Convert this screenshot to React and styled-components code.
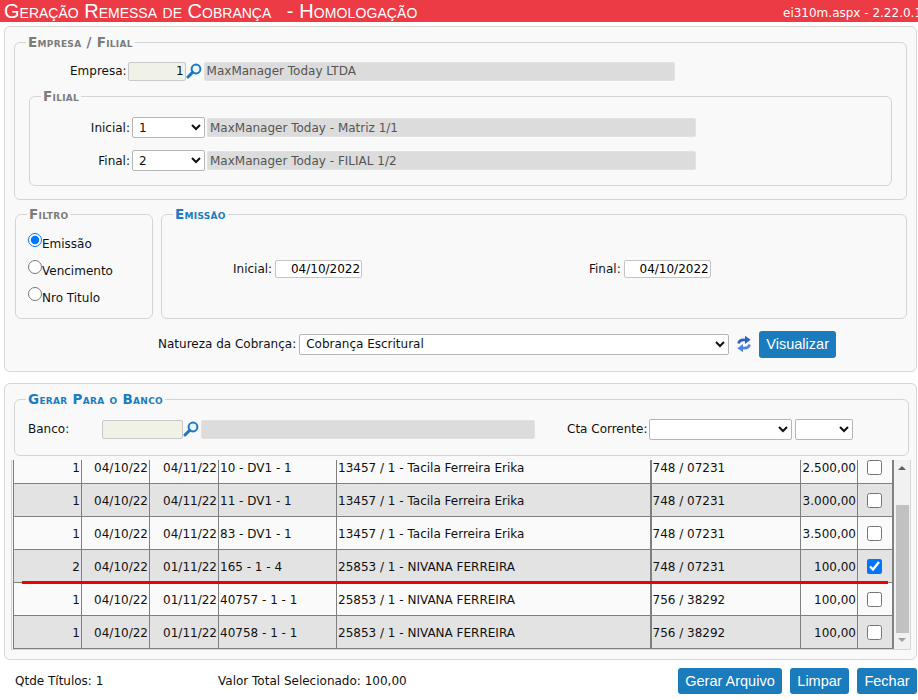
import styled, { createGlobalStyle } from "styled-components";

const linhas = [
  { qtd: 1, emissao: "04/10/22", venc: "04/11/22", titulo: "10 - DV1 - 1", cliente: "13457 / 1 - Tacila Ferreira Erika", conta: "748 / 07231", valor: "2.500,00" },
  { qtd: 1, emissao: "04/10/22", venc: "04/11/22", titulo: "11 - DV1 - 1", cliente: "13457 / 1 - Tacila Ferreira Erika", conta: "748 / 07231", valor: "3.000,00" },
  { qtd: 1, emissao: "04/10/22", venc: "04/11/22", titulo: "83 - DV1 - 1", cliente: "13457 / 1 - Tacila Ferreira Erika", conta: "748 / 07231", valor: "3.500,00" },
  { qtd: 2, emissao: "04/10/22", venc: "01/11/22", titulo: "165 - 1 - 4", cliente: "25853 / 1 - NIVANA FERREIRA", conta: "748 / 07231", valor: "100,00", marcado: true },
  { qtd: 1, emissao: "04/10/22", venc: "01/11/22", titulo: "40757 - 1 - 1", cliente: "25853 / 1 - NIVANA FERREIRA", conta: "756 / 38292", valor: "100,00" },
  { qtd: 1, emissao: "04/10/22", venc: "01/11/22", titulo: "40758 - 1 - 1", cliente: "25853 / 1 - NIVANA FERREIRA", conta: "756 / 38292", valor: "100,00" },
];

function Lupa() {
  return (
    <LupaSvg viewBox="0 0 16 16">
      <circle cx="10" cy="6" r="4.4" fill="#eaf4fb" stroke="#1a78c2" strokeWidth="2" />
      <path d="M6.6 9.4 L2 14" stroke="#1a78c2" strokeWidth="3" strokeLinecap="round" />
    </LupaSvg>
  );
}

function Atualizar() {
  return (
    <RefreshSvg viewBox="0 0 14 18">
      <path d="M1.5 8.5 C2 5.5 5 4.6 8.5 5" fill="none" stroke="#2a63c8" strokeWidth="2.6" />
      <path d="M8 0.8 L13.6 4.8 L8 9 Z" fill="#2a63c8" />
      <path d="M12.5 9.5 C12 12.5 9 13.4 5.5 13" fill="none" stroke="#4d86dc" strokeWidth="2.6" />
      <path d="M6 9 L0.4 13.2 L6 17.2 Z" fill="#4d86dc" />
    </RefreshSvg>
  );
}

export default function App() {
  return (
    <>
      <GlobalStyle />
      <Header>
        <Title>Geração Remessa de Cobrança <TitleEnv>- Homologação</TitleEnv></Title>
        <Version>ei310m.aspx - 2.22.0.1</Version>
      </Header>

      <Panel>
        <EmpresaSet>
          <Legend>Empresa / Filial</Legend>
          <EmpresaRow>
            <EmpresaLabel>Empresa:</EmpresaLabel>
            <CodeInput width={58} defaultValue="1" readOnly />
            <Lupa />
            <GreyInput width={471} defaultValue="MaxManager Today LTDA" readOnly />
          </EmpresaRow>
          <FilialSet>
            <Legend>Filial</Legend>
            <FilialRow>
              <FilialLabel>Inicial:</FilialLabel>
              <Select width={73}><option>1</option></Select>
              <GreyInput width={489} defaultValue="MaxManager Today - Matriz 1/1" readOnly />
            </FilialRow>
            <FilialRow>
              <FilialLabel>Final:</FilialLabel>
              <Select width={73}><option>2</option></Select>
              <GreyInput width={489} defaultValue="MaxManager Today - FILIAL 1/2" readOnly />
            </FilialRow>
          </FilialSet>
        </EmpresaSet>

        <FiltroRow>
          <FiltroSet>
            <Legend>Filtro</Legend>
            <RadioLine><input type="radio" name="filtro" defaultChecked />Emissão</RadioLine>
            <RadioLine><input type="radio" name="filtro" />Vencimento</RadioLine>
            <RadioLine><input type="radio" name="filtro" />Nro Titulo</RadioLine>
          </FiltroSet>
          <EmissaoSet>
            <Legend $blue>Emissão</Legend>
            <DateRow>
              <DateGroup $width={356}>
                <Label>Inicial:</Label>
                <DateInput defaultValue="04/10/2022" readOnly />
              </DateGroup>
              <DateGroup>
                <Label>Final:</Label>
                <DateInput defaultValue="04/10/2022" readOnly />
              </DateGroup>
            </DateRow>
          </EmissaoSet>
        </FiltroRow>

        <NaturezaRow>
          <NaturezaLabel>Natureza da Cobrança:</NaturezaLabel>
          <Select width={430}><option>Cobrança Escritural</option></Select>
          <Atualizar />
          <Button $w={77}>Visualizar</Button>
        </NaturezaRow>
      </Panel>

      <BottomPanel>
        <BancoSet>
          <Legend $blue>Gerar Para o Banco</Legend>
          <BancoRow>
            <BancoLabel>Banco:</BancoLabel>
            <CodeInput width={81} readOnly />
            <Lupa />
            <GreyInput width={334} readOnly />
            <CtaLabel>Cta Corrente:</CtaLabel>
            <Select width={143}><option></option></Select>
            <SmallSelect width={58}><option></option></SmallSelect>
          </BancoRow>
        </BancoSet>

        <GridWrap>
          <Table>
            <colgroup>
              <col width="68" />
              <col width="68" />
              <col width="69" />
              <col width="118" />
              <col width="314" />
              <col width="150" />
              <col width="57" />
              <col width="35" />
            </colgroup>
            <tbody>
              {linhas.map((l, i) => (
                <Row key={i} $par={i % 2 === 1} $first={i === 0}>
                  <Cell $right>{l.qtd}</Cell>
                  <Cell $right>{l.emissao}</Cell>
                  <Cell $right>{l.venc}</Cell>
                  <Cell>{l.titulo}</Cell>
                  <Cell $thick>{l.cliente}</Cell>
                  <Cell>{l.conta}</Cell>
                  <Cell $right>{l.valor}</Cell>
                  <Cell $center><Check type="checkbox" $first={i === 0} defaultChecked={l.marcado} /></Cell>
                </Row>
              ))}
            </tbody>
          </Table>
          <Scrollbar>
            <ArrowUp />
            <ThumbArea><Thumb /></ThumbArea>
            <ArrowDown />
          </Scrollbar>
          <RedLine />
        </GridWrap>
      </BottomPanel>

      <Footer>
        <Qtde>Qtde Títulos: 1</Qtde>
        <Total>Valor Total Selecionado: 100,00</Total>
        <Actions>
          <FooterButton $w={104}>Gerar Arquivo</FooterButton>
          <FooterButton $w={59}>Limpar</FooterButton>
          <FooterButton $w={60}>Fechar</FooterButton>
        </Actions>
      </Footer>
    </>
  );
}

const GlobalStyle = createGlobalStyle`
  html, body {
    margin: 0;
    padding: 0;
    background: #fff;
    overflow: hidden;
  }
  body {
    font-family: "DejaVu Sans", Verdana, sans-serif;
    font-size: 12px;
    color: #111;
  }
  * {
    box-sizing: border-box;
  }
`;

const Header = styled.div`
  height: 22px;
  background: #ec3b45;
  color: #fff;
  display: flex;
  justify-content: space-between;
  align-items: center;
  overflow: hidden;
  white-space: nowrap;
  padding-left: 4px;
`;

const Title = styled.div`
  font-family: "Liberation Sans", Arial, sans-serif;
  font-variant: small-caps;
  font-size: 20px;
  line-height: 22px;
`;

const TitleEnv = styled.span`
  margin-left: 10px;
  letter-spacing: 0.1px;
`;

const Version = styled.div`
  flex: none;
  width: 135px;
  font-size: 12px;
  padding-top: 3px;
`;

const Panel = styled.div`
  margin: 4px 1px 0 4px;
  height: 346px;
  background: #f9f9f9;
  border: 1px solid #d6d6d6;
  border-radius: 6px;
  padding: 8px 9px 0 9px;
`;

const BottomPanel = styled(Panel)`
  margin-top: 11px;
  height: 277px;
  padding-top: 8px;
  padding-left: 6px;
  padding-right: 6px;
`;

const Fieldset = styled.fieldset`
  margin: 0;
  padding: 0;
  min-width: 0;
  border: 1px solid #d4d4d4;
  border-radius: 6px;
`;

const Legend = styled.legend`
  font-weight: bold;
  font-variant: small-caps;
  font-size: 13.5px;
  letter-spacing: 0.3px;
  line-height: 15px;
  color: ${(p) => (p.$blue ? "#1c7cc0" : "#7c7c7c")};
  padding: 0 2px;
  margin-left: 11px;
`;

const EmpresaSet = styled(Fieldset)`
  height: 165px;
  padding: 0 14px;

  & > legend {
    margin-left: -3px;
  }
`;

const EmpresaRow = styled.div`
  display: flex;
  align-items: center;
  padding-left: 41px;
  height: 20px;
  margin-top: 11px;
  margin-bottom: 8px;
`;

const Label = styled.span`
  white-space: nowrap;
  margin-right: 3px;
`;

const EmpresaLabel = styled(Label)`
  margin-right: 1px;
`;

const Input = styled.input`
  height: 19px;
  width: ${(p) => p.width}px;
  font: inherit;
  border-radius: 2px;
  outline: none;
  padding: 0 1px;
  flex: none;
`;

const CodeInput = styled(Input)`
  background: #f0f2e8;
  border: 1px solid #c8c8c8;
  text-align: right;
  color: #111;
`;

const GreyInput = styled(Input)`
  background: #dcdcdc;
  border: 1px solid #e2e2e2;
  color: #555;
  padding-left: 2px;
  margin-left: 2px;
`;

const LupaSvg = styled.svg`
  width: 16px;
  height: 16px;
  flex: none;
`;

const RefreshSvg = styled.svg`
  width: 14px;
  height: 18px;
  margin: 0 8px 0 8px;
  flex: none;
`;

const Select = styled.select`
  width: ${(p) => p.width}px;
  height: 21px;
  font: inherit;
  background: #fff;
  color: #111;
  border: 1px solid #b5b5b5;
  border-radius: 2px;
  padding: 0 2px;
  flex: none;
`;

const SmallSelect = styled(Select)`
  margin-left: 3px;
`;

const FilialSet = styled(Fieldset)`
  height: 97px;
  padding-top: 13px;
`;

const FilialRow = styled.div`
  display: flex;
  align-items: center;
  height: 21px;
  margin-bottom: 12px;
`;

const FilialLabel = styled.span`
  width: 102px;
  text-align: right;
  padding-right: 2px;
  white-space: nowrap;
`;

const FiltroRow = styled.div`
  display: flex;
  gap: 8px;
  margin-top: 7px;
  padding-left: 1px;
`;

const FiltroSet = styled(Fieldset)`
  width: 138px;
  height: 112px;
  padding-top: 8px;
`;

const RadioLine = styled.label`
  display: flex;
  align-items: center;
  height: 27px;
  padding-left: 12px;
  white-space: nowrap;

  input {
    margin: 0;
    width: 14px;
    height: 14px;
    transform: translateY(-4px);
  }
`;

const EmissaoSet = styled(Fieldset)`
  flex: 1;
  height: 112px;
`;

const DateRow = styled.div`
  display: flex;
  align-items: center;
  padding-left: 71px;
  height: 90px;
  padding-top: 4px;
`;

const DateGroup = styled.div`
  display: flex;
  align-items: center;
  width: ${(p) => (p.$width ? `${p.$width}px` : "auto")};
`;

const DateInput = styled(Input)`
  width: 87px;
  height: 18px;
  background: #fff;
  border: 1px solid #c4c4c4;
  text-align: right;
`;

const NaturezaRow = styled.div`
  display: flex;
  align-items: center;
  padding-left: 144px;
  margin-top: 9px;
  height: 32px;
`;

const NaturezaLabel = styled.span`
  white-space: nowrap;
  margin-right: 3px;
`;

const Button = styled.button`
  width: ${(p) => p.$w}px;
  height: 27px;
  border: none;
  border-radius: 3px;
  background: #1a7bbd;
  color: #fff;
  font-family: "Liberation Sans", Arial, sans-serif;
  font-size: 14.5px;
  padding: 0;
  white-space: nowrap;
  flex: none;
`;

const FooterButton = styled(Button)`
  height: 26px;
`;

const BancoSet = styled(Fieldset)`
  margin-left: 3px;
  width: 895px;
  height: 64px;
`;

const BancoRow = styled.div`
  display: flex;
  align-items: center;
  padding-left: 13px;
  margin-top: 12px;
  height: 20px;
`;

const BancoLabel = styled.span`
  width: 74px;
`;

const CtaLabel = styled.span`
  margin-left: 32px;
  margin-right: 2px;
  white-space: nowrap;
`;

const GridWrap = styled.div`
  position: relative;
  display: flex;
  margin-top: 4px;
  width: 900px;
  height: 190px;
  border: 1px solid #d6d6d6;
  border-top: none;
  background: #f4f4f4;
  padding-left: 1px;
`;

const Table = styled.table`
  border-collapse: collapse;
  table-layout: fixed;
  width: 880px;
  height: 188px;
  border: 1px solid #808080;
  border-top: none;
  border-right-width: 2px;
`;

const Row = styled.tr`
  height: ${(p) => (p.$first ? "23px" : "33px")};
  background: ${(p) => (p.$par ? "#e3e3e3" : "#fafafa")};

  td {
    padding-top: ${(p) => (p.$first ? "0" : "2px")};
    padding-bottom: ${(p) => (p.$first ? "8px" : "0")};
  }
`;

const Cell = styled.td`
  border: 1px solid #808080;
  border-right-width: ${(p) => (p.$thick ? "2px" : "1px")};
  padding: 0 1px;
  white-space: nowrap;
  overflow: hidden;
  text-align: ${(p) => (p.$right ? "right" : p.$center ? "center" : "left")};

  tr:first-child & {
    border-top: none;
  }
`;

const Check = styled.input`
  width: 15px;
  height: 15px;
  margin: ${(p) => (p.$first ? "0" : "-2px 0 0")};
  vertical-align: middle;
`;

const Scrollbar = styled.div`
  width: 17px;
  margin-left: 1px;
  background: #f1f1f1;
  display: flex;
  flex-direction: column;
  align-items: center;
`;

const ThumbArea = styled.div`
  flex: 1;
  width: 100%;
  padding-top: 35px;
  padding-bottom: 5px;
`;

const Thumb = styled.div`
  height: 100%;
  width: 13px;
  margin: 0 auto;
  background: #c1c1c1;
`;

const ArrowUp = styled.div`
  margin-top: 6px;
  width: 0;
  height: 0;
  border-left: 4px solid transparent;
  border-right: 4px solid transparent;
  border-bottom: 4px solid #606060;
`;

const ArrowDown = styled.div`
  margin-bottom: 7px;
  width: 0;
  height: 0;
  border-left: 4px solid transparent;
  border-right: 4px solid transparent;
  border-top: 4px solid #a0a0a0;
`;

const RedLine = styled.div`
  position: absolute;
  left: 10px;
  top: 121px;
  width: 866px;
  height: 3px;
  background: #f00000;
`;

const Footer = styled.div`
  display: flex;
  align-items: center;
  margin-top: 8px;
  padding-left: 15px;
  height: 26px;
`;

const Qtde = styled.span`
  width: 203px;
`;

const Total = styled.span`
  white-space: nowrap;
`;

const Actions = styled.div`
  margin-left: auto;
  margin-right: 1px;
  display: flex;
  gap: 8px;
`;
